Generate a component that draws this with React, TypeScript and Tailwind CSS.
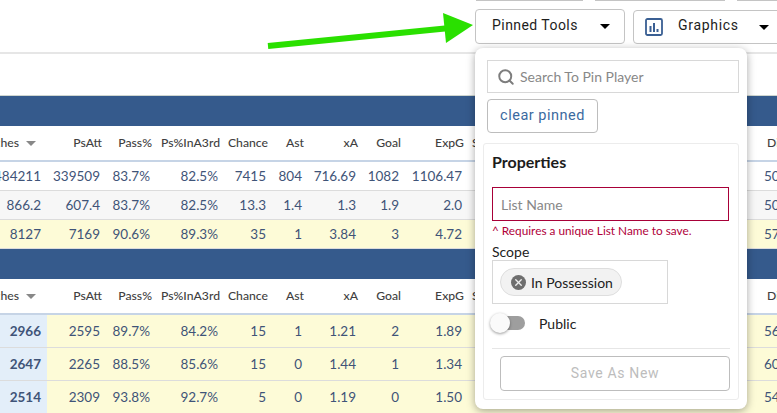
import { Search, X } from "lucide-react";

const gridCols = "grid grid-cols-[47px_57px_50px_68px_48px_36px_54px_43px_63px_298px_13px]";
const headers = ["Matches", "PsAtt", "Pass%", "Ps%InA3rd", "Chance", "Ast", "xA", "Goal", "ExpG"];

function Caret({ className }: { className?: string }) {
  return <span className={`block w-0 h-0 border-x-[5px] border-x-transparent border-t-[5px] border-t-black ${className ?? ""}`} />;
}

function HeaderRow({ height }: { height: string }) {
  return (
    <div className={`${gridCols} ${height} bg-white items-center pt-px text-[12.2px] font-medium text-[#3f3f3f] border-b-2 border-[#c6d4e6]`}>
      {headers.map((h, i) => (
        <div key={h} className="flex justify-end items-center overflow-hidden whitespace-nowrap pr-[2px]">
          {h}
          {i === 0 && <span className="shrink-0 ml-[7px] mr-[9px] block w-0 h-0 border-x-[5px] border-x-transparent border-t-[5px] border-t-[#888]" />}
        </div>
      ))}
      <div className="pl-[6px] overflow-hidden whitespace-nowrap">Shots</div>
      <div className="pl-[3px] overflow-hidden whitespace-nowrap">Dist</div>
    </div>
  );
}

function DataRow({ cells, last, bg, first, height }: { cells: string[]; last: string; bg: string; first?: boolean; height: string }) {
  return (
    <div className={`${gridCols} ${height} ${bg} items-stretch text-[13.5px] text-[#3f5478] border-b border-[#dcdcdc]`}>
      {cells.map((c, i) => (
        <div
          key={i}
          className={`flex items-center justify-end overflow-hidden whitespace-nowrap ${i === 0 ? "pr-[6px]" : "pr-[4px]"} ${i === 0 && first ? "bg-[#e3eef9] font-bold" : ""}`}
        >
          {c}
        </div>
      ))}
      <div />
      <div className="flex items-center overflow-hidden whitespace-nowrap">{last}</div>
    </div>
  );
}

function Popover() {
  return (
    <div className="absolute left-[475px] top-[48px] w-[272px] h-[361px] bg-white rounded-lg shadow-[0_2px_8px_rgba(0,0,0,0.35)] pt-[12px] pl-[12px] pr-[8px] flex flex-col">
      <div className="h-[33px] border border-[#d8d8d8] flex items-center pl-[9px] gap-[5px] text-[14px] text-[#888]">
        <Search size={18} strokeWidth={2.6} className="text-[#7d7d7d]" />
        <span>Search To Pin Player</span>
      </div>
      <button className="mt-[6px] w-[111px] h-[34px] border border-[#bdbdbd] rounded text-[14.5px] text-[#3b6aa0] tracking-[0.5px] font-['Roboto',sans-serif]">
        clear pinned
      </button>
      <div className="mt-[10px] -ml-[4px] h-[257px] border border-[#ececec] rounded-[3px] pl-[8px] pr-[9px] flex flex-col">
        <div className="mt-[7px] text-[16px] font-bold text-[#1c1c1c] leading-[22px]">Properties</div>
        <div className="mt-[14px] h-[34px] border border-[#a80038] flex items-center pl-[8px] text-[14px] text-[#888]">List Name</div>
        <div className="mt-[3px] text-[11.8px] leading-[14px] text-[#b0003a] whitespace-nowrap">^ Requires a unique List Name to save.</div>
        <div className="mt-[5px] text-[14px] leading-[17px] text-[#222]">Scope</div>
        <div className="w-[176px] h-[44px] border border-[#d8d8d8] flex items-center pl-[7px]">
          <div className="h-[28px] w-[122px] rounded-full bg-[#f2f2f2] border border-[#dedede] flex items-center pl-[10px] gap-[5px] text-[14px] text-[#222]">
            <span className="w-[15px] h-[15px] rounded-full bg-[#6e6e6e] flex items-center justify-center">
              <X size={11} strokeWidth={3} className="text-[#eee]" />
            </span>
            In Possession
          </div>
        </div>
        <div className="mt-[8px] h-[22px] flex items-center text-[14px] text-[#222]">
          <div className="relative w-[35px] h-[14px] ml-[-2px]">
            <div className="absolute right-0 top-0 w-[28px] h-[14px] rounded-full bg-[#9e9e9e]" />
            <div className="absolute left-0 top-[-3px] w-[20px] h-[20px] rounded-full bg-[#fafafa] shadow-[0_1px_3px_rgba(0,0,0,0.4)]" />
          </div>
          <span className="ml-[14px]">Public</span>
        </div>
        <div className="mt-[14px] -mr-px border-t border-[#e6e6e6]" />
        <button className="mt-[7px] ml-[8px] -mr-px h-[35px] border border-[#bdbdbd] rounded text-[14px] text-[#bdbdbd] tracking-[0.65px] font-['Roboto',sans-serif]">
          Save As New
        </button>
      </div>
    </div>
  );
}

export default function App() {
  return (
    <div className="relative w-[777px] h-[413px] overflow-hidden bg-white font-['Lato',sans-serif]">
      {/* top toolbar */}
      <div className="h-[53px] border-b border-[#e6e6e6]">
        <div className="flex h-px">
          <div className="ml-[476px] w-[107px] bg-[#c4c4c4]" />
          <div className="ml-[12px] w-[130px] bg-[#c4c4c4]" />
          <div className="ml-[12px] flex-1 bg-[#c4c4c4]" />
        </div>
        <div className="flex items-start mt-[8px] font-['Roboto',sans-serif] text-[14px] tracking-[0.45px] text-[#1d1d1d]">
          <div className="shrink-0 ml-[475px] w-[150px] h-[35px] border border-[#c4c4c4] rounded flex items-center pl-[16px] pr-[14px] justify-between">
            <span className="-mt-[3px]">Pinned Tools</span>
            <Caret />
          </div>
          <div className="shrink-0 ml-[8px] mt-px w-[150px] h-[34px] border border-[#c4c4c4] rounded flex items-center pl-[11px]">
            <svg width="18" height="18" viewBox="0 0 18 18" className="shrink-0">
              <rect x="1" y="1" width="16" height="16" rx="1.5" fill="none" stroke="#3a5f93" strokeWidth="1.8" />
              <rect x="4.5" y="8" width="2" height="6" fill="#3a5f93" />
              <rect x="8" y="5" width="2" height="9" fill="#3a5f93" />
              <rect x="11.5" y="11" width="2" height="3" fill="#3a5f93" />
            </svg>
            <span className="ml-[15px] -mt-[3px] tracking-[0.7px]">Graphics</span>
            <Caret className="ml-[20px]" />
          </div>
        </div>
      </div>
      <div className="h-[42px] border-t border-[#e6e6e6]" />

      {/* first table */}
      <div className="h-[31px] border-t border-[#cfd6d0] bg-[#355a8c]" />
      <HeaderRow height="h-[36px]" />
      <DataRow height="h-[29px]" bg="bg-white" last="50.2" cells={["484211", "339509", "83.7%", "82.5%", "7415", "804", "716.69", "1082", "1106.47"]} />
      <DataRow height="h-[29px]" bg="bg-[#f7f7f7]" last="50.2" cells={["866.2", "607.4", "83.7%", "82.5%", "13.3", "1.4", "1.3", "1.9", "2.0"]} />
      <DataRow height="h-[29px]" bg="bg-[#fdfbd7]" last="57.1" cells={["8127", "7169", "90.6%", "89.3%", "35", "1", "3.84", "3", "4.72"]} />

      {/* second table */}
      <div className="h-[30px] bg-[#355a8c]" />
      <HeaderRow height="h-[36px]" />
      <DataRow first height="h-[33px]" bg="bg-[#fdfbd7]" last="56.4" cells={["2966", "2595", "89.7%", "84.2%", "15", "1", "1.21", "2", "1.89"]} />
      <DataRow first height="h-[33px]" bg="bg-[#fdfbd7]" last="60.3" cells={["2647", "2265", "88.5%", "85.6%", "15", "0", "1.44", "1", "1.34"]} />
      <DataRow first height="h-[33px]" bg="bg-[#fdfbd7]" last="54.9" cells={["2514", "2309", "93.8%", "92.7%", "5", "0", "1.19", "0", "1.50"]} />

      <Popover />

      {/* green annotation arrow */}
      <svg className="absolute left-[260px] top-[5px]" width="220" height="50" viewBox="0 0 220 50">
        <line x1="8" y1="41" x2="190" y2="23" stroke="#2ae000" strokeWidth="6" />
        <polygon points="183,8 213,20 186,38" fill="#2ae000" />
      </svg>
    </div>
  );
}
